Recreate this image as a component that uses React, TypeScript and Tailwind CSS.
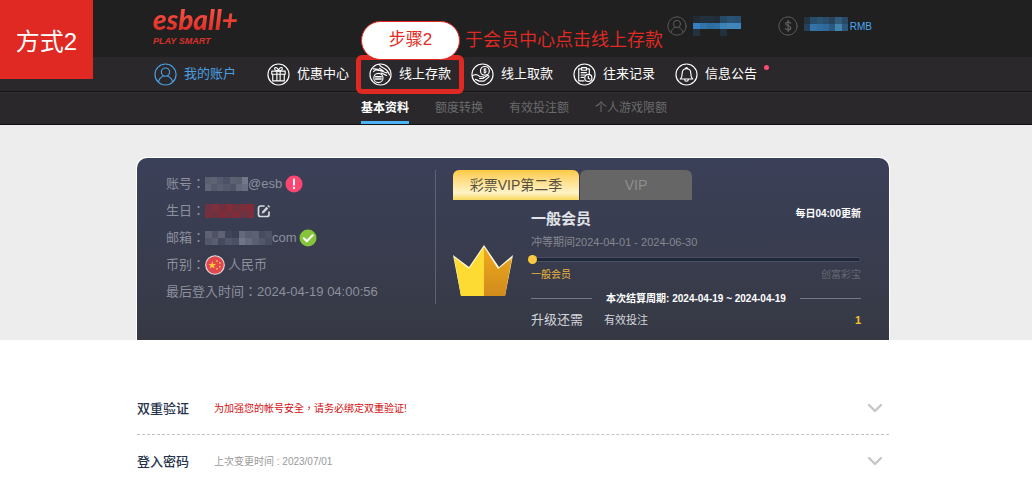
import { useState } from 'react'
import type { ReactNode } from 'react'
import { ChevronDown } from 'lucide-react'

const subTabs = ['基本资料', '额度转换', '有效投注额', '个人游戏限额']

const navItems = [
  { label: '我的账户', icon: <UserGlyph /> },
  { label: '优惠中心', icon: <GiftGlyph /> },
  { label: '线上存款', icon: <DepositGlyph /> },
  { label: '线上取款', icon: <WithdrawGlyph /> },
  { label: '往来记录', icon: <RecordGlyph /> },
  { label: '信息公告', icon: <BellGlyph /> }
]

export default function App() {
  const [subTab, setSubTab] = useState(subTabs[0])
  const [vipTab, setVipTab] = useState('lottery')

  return (
    <div className="relative min-h-screen bg-white font-['Liberation_Sans','Noto_Sans_CJK_SC',sans-serif] text-[13px]">
      <header className="bg-[#202020]">
        <Container>
          <div className="flex h-[57px] items-start justify-between pl-4">
            <Logo />
            <div className="flex pt-4 pr-[17px]">
              <div className="flex w-[111px] items-center gap-1.5">
                <RoundIcon className="size-5 text-[#5b5b5b]">
                  <UserGlyph />
                </RoundIcon>
                <Mosaic cells={accountCells} className="h-5 w-12" />
              </div>
              <div className="flex items-center gap-1.5">
                <RoundIcon className="size-5 text-[#5b5b5b]">
                  <DollarGlyph />
                </RoundIcon>
                <Mosaic cells={balanceCells} className="mb-1 h-[14px] w-11" />
                <span className="-ml-1 text-[10px] text-[#4aa8f2]">RMB</span>
              </div>
            </div>
          </div>
        </Container>

        <nav className="border-b border-[#141414] bg-[#2a282b]">
          <Container>
            <ul className="flex h-[34px] items-center gap-5 pl-[17px]">
              {navItems.map((item, i) => (
                <li key={item.label} className={`relative ${i === 0 ? 'mr-[11px]' : ''}`}>
                  <a
                    href="#"
                    className={`flex items-center gap-[7px] whitespace-nowrap ${i === 0 ? 'text-[#4a9fe0]' : 'text-white'}`}
                  >
                    <RoundIcon className="size-[23px]">{item.icon}</RoundIcon>
                    {item.label}
                  </a>
                  {i === 5 && <span className="absolute top-0.5 -right-3 size-[5px] rounded-full bg-[#ff4b70]" />}
                  {i === 2 && <StepCallout />}
                </li>
              ))}
            </ul>
          </Container>
        </nav>

        <div className="border-t border-b border-t-[#333135] border-b-[#111111] bg-[#2a282b]">
          <Container>
            <div className="flex h-[31px] gap-[26px] pl-56" role="tablist">
              {subTabs.map((tab) => (
                <button
                  key={tab}
                  role="tab"
                  aria-selected={subTab === tab}
                  onClick={() => setSubTab(tab)}
                  className={`border-b-3 pt-0.5 text-xs whitespace-nowrap ${
                    subTab === tab ? 'border-[#4db1f5] font-bold text-white' : 'border-transparent text-[#6b6b6b]'
                  }`}
                >
                  {tab}
                </button>
              ))}
            </div>
          </Container>
        </div>
      </header>

      <main>
        <section className="bg-[#ededed] pt-[33px]">
          <Container>
            <div className="flex rounded-t-[10px] bg-linear-to-b from-[#3b4059] to-[#363944] pt-3 pr-7 pb-2.5 pl-[29px] ring-1 ring-white">
              <ul className="w-[269px] shrink-0 font-['Liberation_Sans','Noto_Sans_CJK_TC',sans-serif] text-[#8d909d]">
                <InfoRow label="账号：">
                  <Mosaic cells={greyCells} className="h-[14px] w-[43px]" />
                  <span>@esb</span>
                  <AlertBadge />
                </InfoRow>
                <InfoRow label="生日：">
                  <Mosaic cells={redCells} className="h-[14px] w-[49px]" />
                  <button aria-label="编辑生日" className="ml-[3px]">
                    <EditIcon />
                  </button>
                </InfoRow>
                <InfoRow label="邮箱：">
                  <Mosaic cells={mailCells} className="h-[14px] w-[67px]" />
                  <span>com</span>
                  <CheckBadge />
                </InfoRow>
                <InfoRow label="币别：">
                  <FlagIcon />
                  <span className="ml-[3px]">人民币</span>
                </InfoRow>
                <InfoRow label="最后登入时间：">2024-04-19 04:00:56</InfoRow>
              </ul>

              <div className="h-[134px] border-l border-[#5f6270]" />

              <div className="min-w-0 flex-1 pl-[17px]">
                <div className="flex h-[30px] gap-px text-sm" role="tablist">
                  <button
                    role="tab"
                    aria-selected={vipTab === 'lottery'}
                    onClick={() => setVipTab('lottery')}
                    className="w-[126px] rounded-t-md bg-linear-to-b from-[#ffc93f] via-[#fff3c4] via-75% to-[#f8d95c] text-[#55503f]"
                  >
                    彩票VIP第二季
                  </button>
                  <button
                    role="tab"
                    aria-selected={vipTab === 'vip'}
                    onClick={() => setVipTab('vip')}
                    className="w-28 rounded-t-md bg-[#666666] text-[#8e8e8e]"
                  >
                    VIP
                  </button>
                </div>

                <div className="flex">
                  <Crown />
                  <div className="flex-1 pt-1 pl-[18px] text-[10px]">
                    <div className="flex h-[30px] items-center justify-between">
                      <h2 className="text-[15px] font-bold text-[#e2e3e8]">一般会员</h2>
                      <span className="-mt-3 font-bold text-white">每日04:00更新</span>
                    </div>
                    <p className="h-4 text-[11px] leading-4 text-[#85878f]">冲等期间2024-04-01 - 2024-06-30</p>
                    <div className="relative mt-[7px] h-[5px] rounded-full border border-[#4a4f61] bg-[#202738]">
                      <span className="absolute -top-[3px] -left-1 size-[9px] rounded-full bg-[#fdc940]" />
                    </div>
                    <div className="flex h-6 items-center justify-between">
                      <span className="text-[#e9b63c]">一般会员</span>
                      <span className="text-[#666974]">创富彩宝</span>
                    </div>
                    <div className="flex h-6 items-center gap-3.5">
                      <span className="h-px flex-1 bg-[#777a84]" />
                      <span className="font-bold whitespace-nowrap text-white">
                        本次结算周期: 2024-04-19 ~ 2024-04-19
                      </span>
                      <span className="h-px flex-1 bg-[#777a84]" />
                    </div>
                    <div className="flex h-5 items-center text-[11px] text-[#d3d4d9]">
                      <span className="w-[73px] text-[13px]">升级还需</span>
                      <span>有效投注</span>
                      <span className="ml-auto font-bold text-[#f5c02e]">1</span>
                    </div>
                  </div>
                </div>
              </div>
            </div>
          </Container>
        </section>

        <Container>
          <div className="pt-[42px]">
            <SettingRow title="双重验证">
              <span className="text-[#d30f12]">为加强您的帐号安全，请务必绑定双重验证!</span>
            </SettingRow>
            <div className="border-t border-dashed border-[#c4c4c4]" />
            <SettingRow title="登入密码">
              <span className="text-[#999999]">上次变更时间 : 2023/07/01</span>
            </SettingRow>
          </div>
        </Container>
      </main>

      <div className="absolute top-0 left-0 flex h-[79px] w-[93px] items-center justify-center bg-[#df2922] pt-1 text-2xl text-white">
        方式2
      </div>
    </div>
  )
}

function Container({ children }: { children: ReactNode }) {
  return <div className="mx-auto max-w-[758px] pr-1.5">{children}</div>
}

// Tutorial marker that sits around the deposit link
function StepCallout() {
  return (
    <div className="pointer-events-none absolute -top-2 -left-[13px] w-[108px] whitespace-nowrap">
      <div className="h-[39px] rounded-md border-5 border-[#df2922]" />
      <div className="absolute bottom-[34px] left-[5px] flex h-[39px] w-[99px] items-center justify-center rounded-full border border-[#df2922] bg-white text-[17px] text-[#df2922]">
        步骤2
      </div>
      <div className="absolute bottom-[42px] left-[109px] text-lg leading-6 text-[#df2922]">
        于会员中心点击线上存款
      </div>
    </div>
  )
}

function InfoRow({ label, children }: { label: string; children: ReactNode }) {
  return (
    <li className="flex h-[27px] items-center whitespace-nowrap">
      <span>{label}</span>
      {children}
    </li>
  )
}

function SettingRow({ title, children }: { title: string; children: ReactNode }) {
  return (
    <div className="flex h-[52px] items-center font-['Liberation_Sans','Noto_Sans_CJK_TC',sans-serif] text-[10px]">
      <h3 className="w-[77px] font-['Noto_Sans_CJK_SC',sans-serif] text-[13px] font-medium text-[#25324a]">{title}</h3>
      {children}
      <button aria-label={title} className="mr-0.5 ml-auto text-[#c6c6c6]">
        <ChevronDown size={24} strokeWidth={2.4} />
      </button>
    </div>
  )
}

function Logo() {
  return (
    <a href="#" className="block pt-0.5 italic">
      <span className="block bg-linear-to-b from-[#ff5a4c] to-[#d8231f] bg-clip-text pr-1 font-['Lato',sans-serif] text-[28px] leading-[34px] font-black text-transparent">
        esball+
      </span>
      <span className="block text-[9px] leading-[10px] font-bold text-[#d9302b]">PLAY SMART</span>
    </a>
  )
}

function RoundIcon({ className, children }: { className: string; children: ReactNode }) {
  return (
    <svg
      viewBox="0 0 24 24"
      fill="none"
      stroke="currentColor"
      strokeWidth="1.2"
      strokeLinecap="round"
      strokeLinejoin="round"
      className={`shrink-0 ${className}`}
    >
      <circle cx="12" cy="12" r="11" />
      {children}
    </svg>
  )
}

function UserGlyph() {
  return (
    <>
      <circle cx="12" cy="9.5" r="4.3" />
      <path d="M4.6 19.8c.6-3 2.6-5.200 5-6M19.400 19.800c-.6-3-2.600-5.200-5-6" />
    </>
  )
}

function GiftGlyph() {
  return (
    <>
      <path d="M5 8.500h14v3.200H5zM6 11.700h12v7H6zM10.300 8.500v10.200M13.700 8.500v10.200" />
      <path d="M12 8.300C10 8.300 7.500 7.300 8 5.500c.7-1.900 3.500-.2 4 2.800zM12 8.300c2 0 4.500-1 4-2.800-.7-1.900-3.500-.2-4 2.800z" />
    </>
  )
}

function DepositGlyph() {
  return (
    <>
      <circle cx="9.800" cy="15.600" r="4.800" />
      <path d="M6.800 14.300h6M6.800 16.700h6" strokeWidth="1.400" />
      <path d="M10.500 1.500c1.500 2.600 3.500 3.500 6 4.500 2.300 1.200 3.700 3.200 5 6.500M4.500 6.200c3-.4 5 .3 7.500 1.800M4.800 9c1.500-2 3.500-2 5.500-1.200M12 8c2.500.5 4 1.800 6.500 2.300M12.500 10.500c2 .2 3 1.700 6 2.500M10.800 5.500l4.200 2.800" />
    </>
  )
}

function WithdrawGlyph() {
  return (
    <>
      <circle cx="14.500" cy="8.200" r="4.600" />
      <path d="M15.800 6.700c-.5-.7-2.500-.7-2.500.4 0 1.300 2.600.8 2.600 2.100 0 1.100-2.100 1.200-2.700.4M14.500 5.600v5.200" strokeWidth="1" />
      <path d="M1.500 13l3.500-1c1.800 0 3 1.200 4.300 2.300h3.200c1 .2.9 1.800-.2 1.900H9M13.400 15.300l3.900-2.200c1.200-.3 1.900.8 1.100 1.600l-4.900 4.200H8.700l-4-1.800" />
    </>
  )
}

function RecordGlyph() {
  return (
    <>
      <path d="M11.500 18.700H6v-12.500h3M14 6.200h3v5M9 4.900h5v2.700H9zM8.500 10h5.500M8.500 12.500h3.500M8.500 15h2.500" />
      <circle cx="16" cy="15.600" r="3.700" />
      <path d="M16 13.600v2.200l1.500.8" />
    </>
  )
}

function BellGlyph() {
  return (
    <>
      <path d="M5.500 16.700c1.700-1.500 2-3.200 2-5.700 0-2.900 1.700-5 4.500-5s4.500 2.100 4.500 5c0 2.500.3 4.200 2 5.700zM11 5.900c0-1.600 2-1.600 2 0M10 16.900c.1 2.800 3.900 2.800 4 0" />
    </>
  )
}

function DollarGlyph() {
  return (
    <path
      d="M15.200 8.600c-.8-1.700-6-1.900-6 .8 0 3 6.200 1.800 6.200 5 0 2.800-5.400 2.700-6.600.6M12.200 5.300v13.400"
      strokeWidth="1.600"
    />
  )
}

function AlertBadge() {
  return (
    <svg viewBox="0 0 18 18" className="ml-[3px] size-[18px]">
      <circle cx="9" cy="9" r="8.500" fill="#ff4670" />
      <path d="M9 4.500v5.300" stroke="#fff" strokeWidth="2" strokeLinecap="round" />
      <circle cx="9" cy="13" r="1.200" fill="#fff" />
    </svg>
  )
}

function CheckBadge() {
  return (
    <svg viewBox="0 0 18 18" className="ml-0.5 size-[18px]">
      <circle cx="9" cy="9" r="8.500" fill="#86c43a" />
      <path d="M4.800 9.300l3 3 5.800-6" stroke="#fff" strokeWidth="2" fill="none" strokeLinecap="round" strokeLinejoin="round" />
    </svg>
  )
}

function EditIcon() {
  return (
    <svg viewBox="0 0 14 14" fill="none" stroke="#d8d9dd" className="size-[14px]">
      <path d="M7 2H3.500A2 2 0 0 0 1.500 4v6.500a2 2 0 0 0 2 2H10a2 2 0 0 0 2-2V8" strokeWidth="1.700" strokeLinecap="round" />
      <path d="M5.800 8.500l4.600-4.800" strokeWidth="2.400" />
      <path d="M11.200 2.900l1-1" strokeWidth="2.400" />
      <path d="M4.700 9.700l.5-1.900 1.400 1.300z" fill="#d8d9dd" stroke="none" />
    </svg>
  )
}

function FlagIcon() {
  return (
    <svg viewBox="0 0 20 20" className="size-5">
      <circle cx="10" cy="10" r="9.300" fill="#e0474f" stroke="#e6dfe4" strokeWidth="1.100" />
      <path d="M7.300 6.300l1 2.700 2.800.1-2.200 1.700.8 2.700-2.400-1.600-2.400 1.600.8-2.700-2.200-1.700 2.800-.1z" fill="#ffc93a" />
      <path d="M11.300 5.300h1.500v1.500h-1.500zM14.100 7.300h1.500v1.500h-1.500zM14.100 10.900h1.500v1.500h-1.500zM11.300 13h1.500v1.500h-1.500z" fill="#ffc93a" />
    </svg>
  )
}

function Crown() {
  return (
    <svg viewBox="0 0 60 52" className="mt-[45px] h-[52px] w-[60px] shrink-0">
      <path d="M0 10l16 12L31 0v51H8z" fill="#fff8dc" />
      <path d="M31 0l15 22 14-12-8 41H31z" fill="#fff8dc" />
      <path d="M1 12l15 12L31 2v49H8z" fill="#fddb32" />
      <path d="M31 2l14 22 14-11-7 38H31z" fill="url(#crownShade)" />
      <defs>
        <linearGradient id="crownShade" x1="0" y1="0" x2="0" y2="1">
          <stop offset="0" stopColor="#f0aa1e" />
          <stop offset="1" stopColor="#d08b1c" />
        </linearGradient>
      </defs>
    </svg>
  )
}

// Pixelated cover over private values, one string per row of colours
const accountCells = [
  ['#212a33', '#22303c', '#22303d', '#212c36', '#244a68', '#2a5274', '#294f70'],
  ['#347fbd', '#3074ab', '#2f6da1', '#2f70a6', '#3a83b8', '#4286b4', '#3d87be'],
  ['#22323f', '#202020', '#202020', '#202020', '#21303d', '#202020', '#202020']
]
const balanceCells = [
  ['#233440', '#284d6b', '#2a5374', '#294e6c', '#28445c', '#315d7b', '#284a64'],
  ['#25405a', '#3373a9', '#336da0', '#2f699c', '#2b587e', '#4383ae', '#2d587d']
]
const greyCells = [
  ['#5b5f70', '#5e6273', '#555a6c', '#4c5165', '#5d6172', '#5a5f70', '#74788a'],
  ['#626678', '#555a6c', '#5b6071', '#54596b', '#4f5467', '#64687a', '#6a6e80']
]
const redCells = [
  ['#6d3342', '#7d303c', '#702f3f', '#802c39', '#6f3040', '#7b2d3a', '#822b38'],
  ['#78303d', '#6b3242', '#812b38', '#743040', '#7e2d39', '#6a3443', '#792f3c']
]
const mailCells = [
  ['#5d6173', '#4e5266', '#5e6274', '#404559', '#3b4056', '#656a7b', '#595e70', '#5d6173', '#474c60', '#4d5265'],
  ['#535769', '#5a5f70', '#454a5e', '#51566a', '#4b5064', '#70758a', '#656a7c', '#5a5f71', '#525769', '#484d60']
]

function Mosaic({ cells, className }: { cells: string[][]; className: string }) {
  return (
    <svg
      viewBox={`0 0 ${cells[0].length} ${cells.length}`}
      preserveAspectRatio="none"
      shapeRendering="crispEdges"
      className={`shrink-0 ${className}`}
    >
      {cells.map((row, y) => row.map((color, x) => <rect key={`${x}-${y}`} x={x} y={y} width="1" height="1" fill={color} />))}
    </svg>
  )
}
